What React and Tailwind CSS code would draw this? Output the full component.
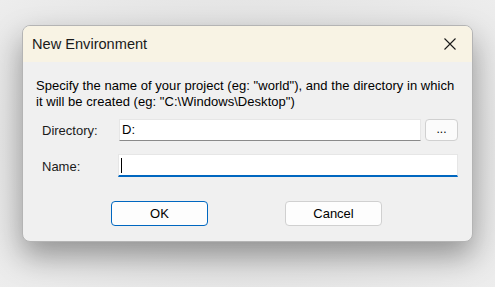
export default function App() {
  return (
    <div
      className="w-[495px] h-[287px] overflow-hidden pt-[25px] pl-[22px] bg-[radial-gradient(ellipse_at_center,#d8d8d8_0%,#e2e2e2_55%,#ededed_100%)]"
      style={{ fontFamily: '"Liberation Sans", Arial, sans-serif' }}
    >
      <div className="w-[451px] h-[217px] rounded-[8px] border border-[#b4b4b4] bg-[#f0f0f0] overflow-hidden shadow-[0_14px_30px_rgba(0,0,0,0.36)] flex flex-col">
        <div className="h-[36px] bg-[#f8f3e4] flex items-center justify-between pl-[9px] pr-[16px] shrink-0">
          <span className="text-[14.6px] text-[#1a1a1a] pt-[1px]">New Environment</span>
          <svg width="12" height="12" viewBox="0 0 12 12">
            <path d="M0.5 0.5 L11.5 11.5 M11.5 0.5 L0.5 11.5" stroke="#1a1a1a" strokeWidth="1.1" />
          </svg>
        </div>
        <div className="flex flex-col pl-[13px] pt-[16px]">
          <p className="text-[13px] leading-[16px] text-[#000] tracking-[0.04px]">
            Specify the name of your project (eg: "world"), and the directory in which
            <br />
            it will be created (eg: "C:\Windows\Desktop")
          </p>
          <div className="flex items-center mt-[9px] h-[22px]">
            <span className="w-[83px] pl-[6px] pt-[2px] text-[13px] text-[#1a1a1a]">Directory:</span>
            <div className="w-[302px] h-[22px] bg-white border border-[#e6e6e6] border-b-[#8a8a8a] flex items-center pl-[2px] text-[13px] text-[#000]">
              D:
            </div>
            <div className="ml-[4px] w-[33px] h-[22px] rounded-[4px] border border-[#d0d0d0] bg-[#fbfbfb] flex items-center justify-center text-[12px] leading-none text-[#000] pb-[2px]">
              ...
            </div>
          </div>
          <div className="flex items-center mt-[13px] h-[23px]">
            <span className="w-[82px] pl-[6px] pt-[3px] text-[13px] text-[#1a1a1a]">Name:</span>
            <div className="w-[340px] h-[23px] bg-white border border-[#e6e6e6] border-b-2 border-b-[#0067c0] flex items-center pl-[2px]">
              <div className="w-[1px] h-[15px] bg-black"></div>
            </div>
          </div>
          <div className="flex mt-[24px] pl-[75px] gap-[77px]">
            <div className="w-[97px] h-[25px] rounded-[4px] border border-[#0067c0] bg-[#fdfdfd] flex items-center justify-center text-[13px] text-[#000]">
              OK
            </div>
            <div className="w-[97px] h-[25px] rounded-[4px] border border-[#d0d0d0] bg-[#fdfdfd] flex items-center justify-center text-[13px] text-[#000]">
              Cancel
            </div>
          </div>
        </div>
      </div>
    </div>
  );
}
